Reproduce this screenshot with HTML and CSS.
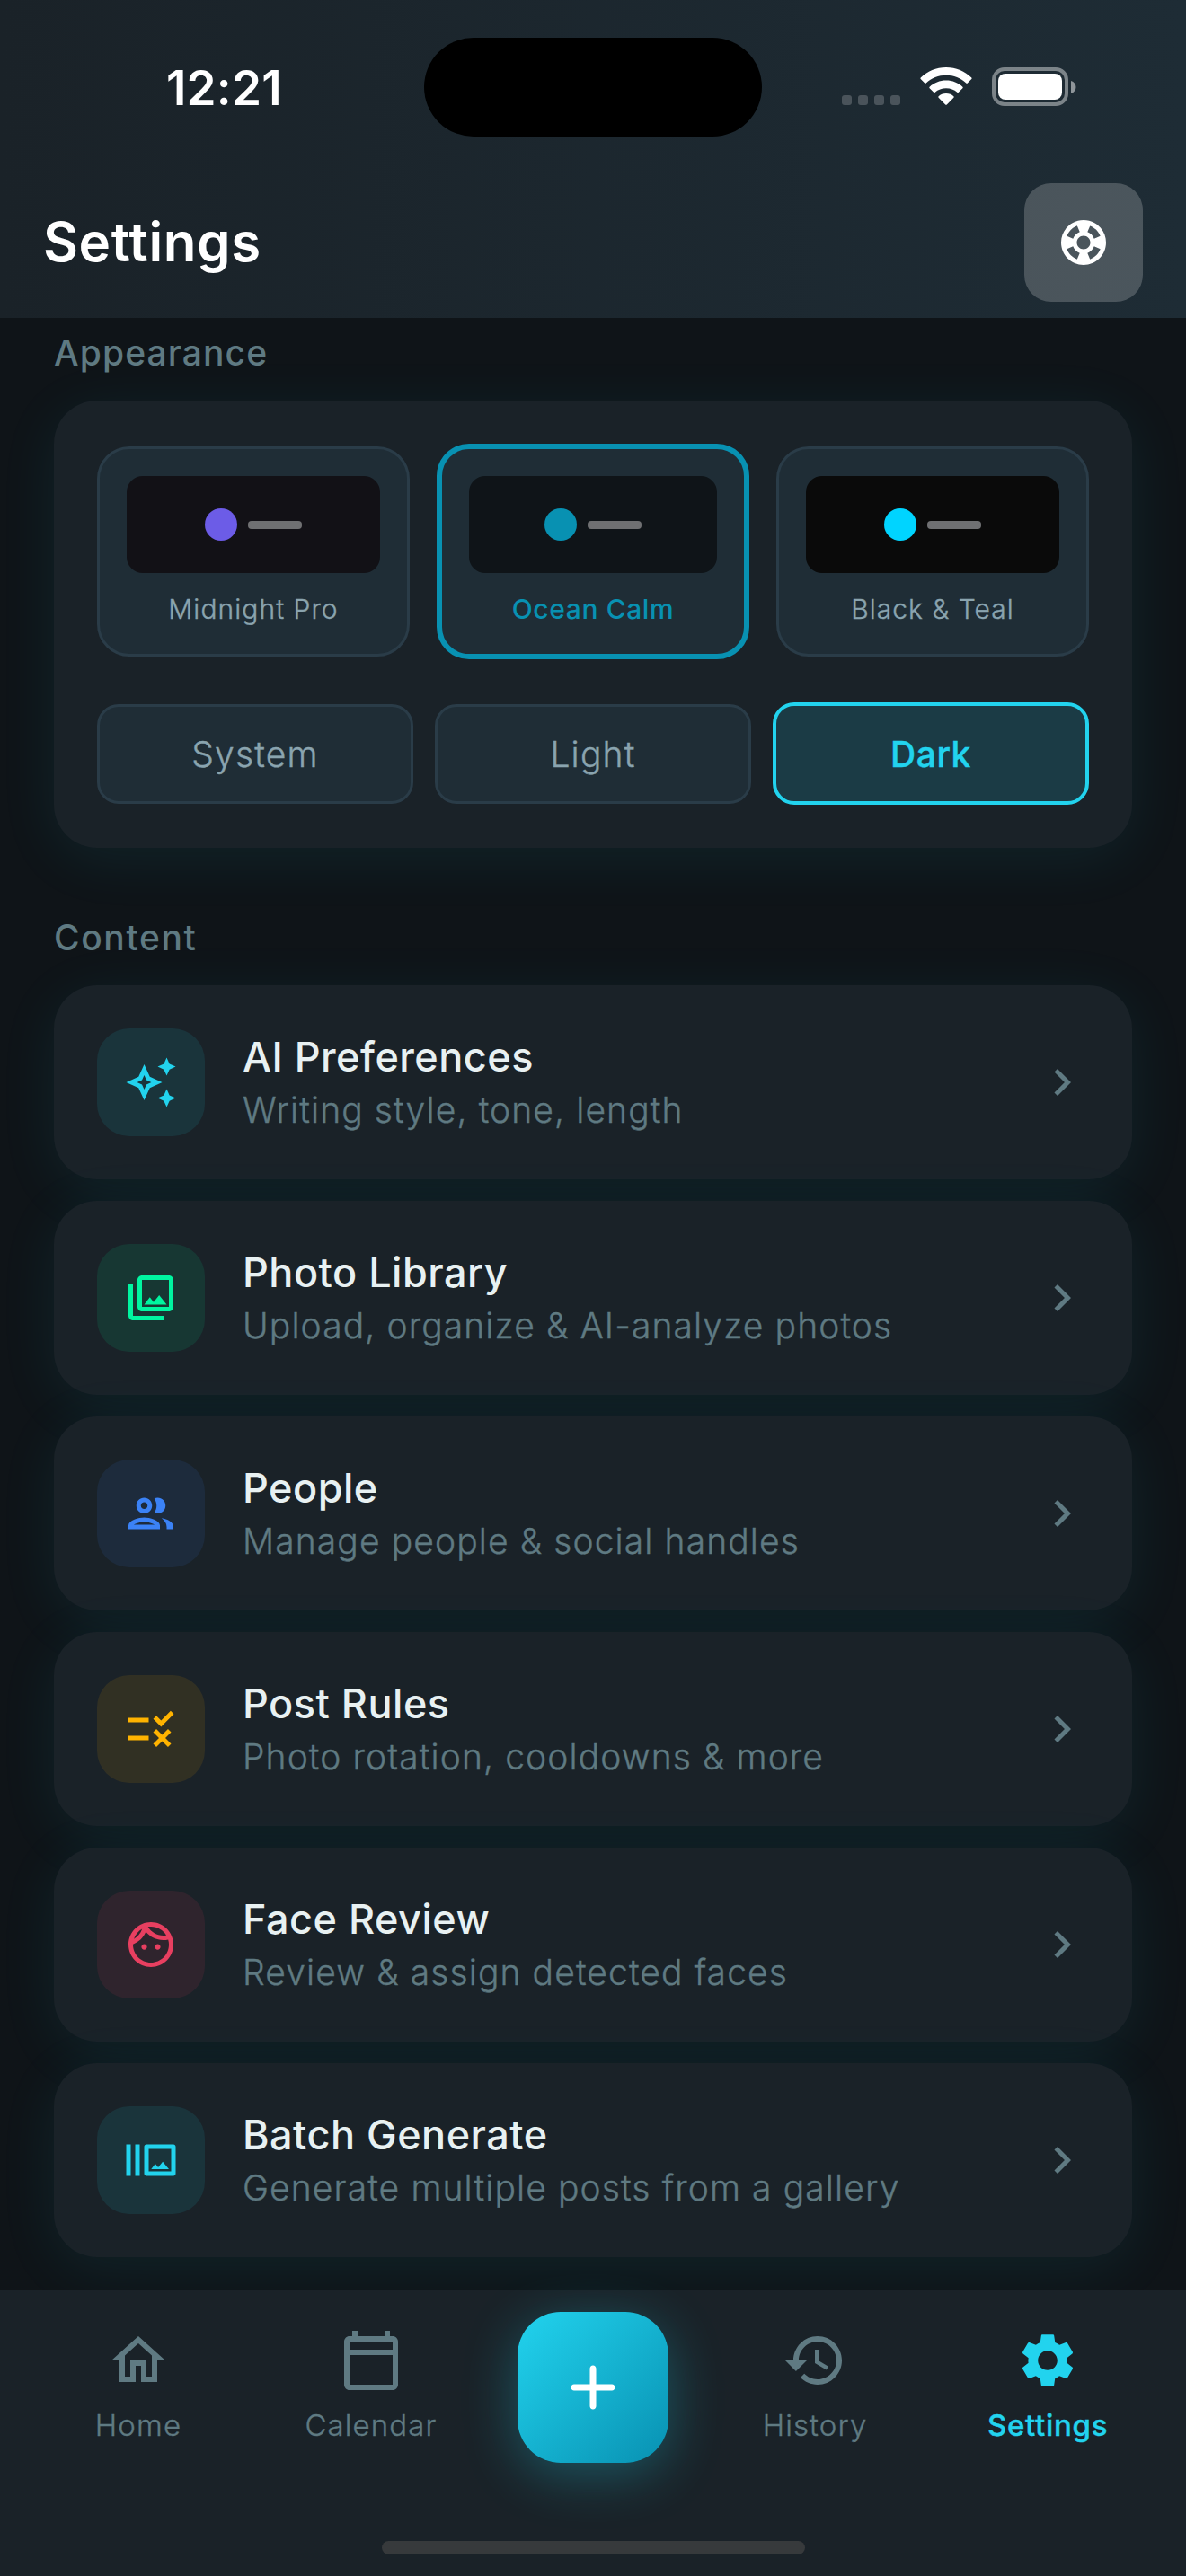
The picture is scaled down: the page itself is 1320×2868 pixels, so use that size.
FILE: index.html
```
<!DOCTYPE html>
<html lang="en">
<head>
  <meta charset="utf-8">
  <title>Settings</title>
  <meta name="viewport" content="width=device-width, initial-scale=1">
  <link rel="stylesheet" href="styles.css">
</head>
<body>
<div class="screen">
  <header class="header">
    <div class="status-bar">
      <div class="time">12:21</div>
      <div class="island"></div>
      <div class="status-icons">
        <div class="signal"><i></i><i></i><i></i><i></i></div>
        <svg class="wifi" viewBox="0 0 58 42"><path d="M29 0C40 0 50 4.300 57.300 11.600c.5.5.5 1 0 1.500l-4.500 4.500c-.5.5-1 .5-1.500 0C45.300 12 37.500 8.800 29 8.800S12.700 12 6.700 17.600c-.5.5-1 .5-1.500 0L.7 13.100c-.5-.5-.5-1 0-1.500C8 4.300 18 0 29 0z"/><path d="M29 14.600c7.100 0 13.600 2.700 18.400 7.200.5.5.5 1 0 1.500l-4.600 4.500c-.5.5-1 .5-1.500 0-3.200-2.800-7.500-4.500-12.300-4.500s-9.100 1.700-12.300 4.500c-.5.5-1 .5-1.500 0l-4.600-4.500c-.5-.5-.5-1 0-1.500 4.800-4.500 11.300-7.200 18.400-7.200z"/><path d="M29 29c3.300 0 6.200 1.200 8.400 3.200.5.5.5 1 0 1.500l-7.600 7.700c-.5.5-1.100.5-1.600 0l-7.600-7.700c-.5-.5-.5-1 0-1.500C22.800 30.200 25.700 29 29 29z"/></svg>
        <svg class="battery" viewBox="0 0 94 43"><rect x="2" y="2" width="81" height="39" rx="12" fill="none" stroke="#fff" stroke-opacity=".42" stroke-width="4"/><rect x="7" y="7" width="71" height="29" rx="8"/><path d="M88 15c3.500 1 5.500 3.700 5.500 7s-2 6-5.500 7z" fill-opacity=".5"/></svg>
      </div>
    </div>
    <div class="title-bar">
      <h1>Settings</h1>
      <button class="help">
        <svg viewBox="0 0 24 24"><path d="M12 2C6.480 2 2 6.480 2 12s4.480 10 10 10 10-4.480 10-10S17.520 2 12 2zm7.460 7.120-2.780 1.150c-.51-1.360-1.580-2.440-2.950-2.940l1.150-2.780c2.100.8 3.770 2.470 4.580 4.570zM12 15c-1.660 0-3-1.340-3-3s1.340-3 3-3 3 1.340 3 3-1.340 3-3 3zM9.130 4.540l1.170 2.780c-1.380.5-2.470 1.590-2.980 2.970L4.540 9.130c.81-2.110 2.480-3.780 4.590-4.590zM4.540 14.870l2.780-1.150c.51 1.380 1.590 2.460 2.970 2.960l-1.170 2.780c-2.100-.81-3.770-2.480-4.580-4.590zm10.340 4.590-1.150-2.780c1.370-.51 2.450-1.590 2.950-2.970l2.780 1.170c-.81 2.100-2.480 3.770-4.580 4.580z"/></svg>
      </button>
    </div>
  </header>

  <main class="content">
    <h2>Appearance</h2>
    <section class="card appearance">
      <div class="themes">
        <div class="theme midnight">
          <div class="preview"><i class="dot"></i><i class="bar"></i></div>
          <p>Midnight Pro</p>
        </div>
        <div class="theme ocean selected">
          <div class="preview"><i class="dot"></i><i class="bar"></i></div>
          <p>Ocean Calm</p>
        </div>
        <div class="theme black">
          <div class="preview"><i class="dot"></i><i class="bar"></i></div>
          <p>Black &amp; Teal</p>
        </div>
      </div>
      <div class="modes">
        <button class="mode">System</button>
        <button class="mode">Light</button>
        <button class="mode active">Dark</button>
      </div>
    </section>

    <h2 class="second">Content</h2>
    <section class="list">
      <div class="card row">
        <div class="tile cyan"><svg viewBox="0 0 24 24"><path d="m19 9 1.250-2.750L23 5l-2.750-1.250L19 1l-1.250 2.750L15 5l2.750 1.250zm0 6-1.250 2.750L15 19l2.750 1.250L19 23l1.250-2.750L23 19l-2.750-1.250zm-7.500-5.500L9 4 6.500 9.500 1 12l5.500 2.500L9 20l2.500-5.500L17 12zm-1.510 3.490L9 15.170l-.99-2.180L5.830 12l2.180-.99L9 8.830l.99 2.180 2.180.99z"/></svg></div>
        <div class="text">
          <h3>AI Preferences</h3>
          <p>Writing style, tone, length</p>
        </div>
        <svg class="chevron" viewBox="0 0 24 24"><path d="M10 6 8.590 7.410 13.170 12l-4.580 4.590L10 18l6-6z"/></svg>
      </div>
      <div class="card row">
        <div class="tile green"><svg viewBox="0 0 24 24"><path d="M20 4v12H8V4h12m0-2H8c-1.100 0-2 .9-2 2v12c0 1.100.9 2 2 2h12c1.100 0 2-.9 2-2V4c0-1.100-.9-2-2-2zm-8.500 9.670 1.690 2.260 2.480-3.100L19 15H9zM2 6v14c0 1.100.9 2 2 2h14v-2H4V6H2z"/></svg></div>
        <div class="text">
          <h3>Photo Library</h3>
          <p>Upload, organize &amp; AI-analyze photos</p>
        </div>
        <svg class="chevron" viewBox="0 0 24 24"><path d="M10 6 8.590 7.410 13.170 12l-4.580 4.590L10 18l6-6z"/></svg>
      </div>
      <div class="card row">
        <div class="tile blue"><svg viewBox="0 -1 24 24"><path d="M16.670 13.130C18.040 14.060 19 15.320 19 17v1h3v-1c0-2.180-2.570-3.470-5.330-3.870z"/><path d="M15 11c1.930 0 3.500-1.570 3.500-3.500S16.930 4 15 4c-.54 0-1.040.13-1.500.35.63.89 1 1.980 1 3.150s-.37 2.260-1 3.150c.46.22.96.35 1.500.35zM9 11c1.930 0 3.500-1.570 3.500-3.500S10.930 4 9 4 5.500 5.570 5.500 7.500 7.070 11 9 11zm0-5c.83 0 1.500.67 1.500 1.500S9.830 9 9 9s-1.500-.67-1.500-1.500S8.170 6 9 6zM9 12.750c-2.340 0-7 1.170-7 3.500V18h14v-1.750c0-2.330-4.660-3.500-7-3.500zM4.340 16c.84-.58 2.870-1.250 4.660-1.250s3.820.67 4.660 1.250H4.340z"/></svg></div>
        <div class="text">
          <h3>People</h3>
          <p>Manage people &amp; social handles</p>
        </div>
        <svg class="chevron" viewBox="0 0 24 24"><path d="M10 6 8.590 7.410 13.170 12l-4.580 4.590L10 18l6-6z"/></svg>
      </div>
      <div class="card row">
        <div class="tile yellow"><svg viewBox="0 0 24 24"><path d="M16.540 11 13 7.460l1.410-1.410 2.120 2.120 4.240-4.240 1.410 1.410zM11 7H2v2h9zm10 6.410L19.590 12 17 14.590 14.410 12 13 13.410 15.590 16 13 18.590 14.410 20 17 17.410 19.590 20 21 18.590 18.410 16zM11 15H2v2h9z"/></svg></div>
        <div class="text">
          <h3>Post Rules</h3>
          <p>Photo rotation, cooldowns &amp; more</p>
        </div>
        <svg class="chevron" viewBox="0 0 24 24"><path d="M10 6 8.590 7.410 13.170 12l-4.580 4.590L10 18l6-6z"/></svg>
      </div>
      <div class="card row">
        <div class="tile red"><svg viewBox="0 0 24 24"><path d="M10.250 13c0 .69-.56 1.250-1.250 1.250S7.750 13.690 7.750 13s.56-1.250 1.250-1.250 1.250.56 1.250 1.250zM15 11.750c-.69 0-1.250.56-1.250 1.250s.56 1.250 1.250 1.250 1.250-.56 1.250-1.250-.56-1.250-1.250-1.250zm7 .25c0 5.520-4.480 10-10 10S2 17.520 2 12 6.480 2 12 2s10 4.480 10 10zM10.660 4.120C12.060 6.440 14.600 8 17.500 8c.46 0 .91-.05 1.340-.12C17.440 5.560 14.900 4 12 4c-.46 0-.91.05-1.340.12zM4.420 9.470c1.710-.97 3.030-2.550 3.660-4.440C6.370 6 5.050 7.580 4.420 9.470zM20 12c0-.78-.12-1.530-.33-2.240-.7.15-1.420.24-2.170.24-3.130 0-5.920-1.440-7.760-3.690C8.690 8.870 6.600 10.880 4 11.860c.01.04 0 .09 0 .14 0 4.410 3.590 8 8 8s8-3.590 8-8z"/></svg></div>
        <div class="text">
          <h3>Face Review</h3>
          <p>Review &amp; assign detected faces</p>
        </div>
        <svg class="chevron" viewBox="0 0 24 24"><path d="M10 6 8.590 7.410 13.170 12l-4.580 4.590L10 18l6-6z"/></svg>
      </div>
      <div class="card row">
        <div class="tile cyan"><svg viewBox="0 0 24 24"><path d="M1 5h2v14H1zm4 0h2v14H5zm17 0H10c-.55 0-1 .45-1 1v12c0 .55.45 1 1 1h12c.55 0 1-.45 1-1V6c0-.55-.45-1-1-1zm-1 12H11V7h10v10z"/><path d="m17.250 12.670-2.030 2.530-1.300-1.560L12.100 16H20z"/></svg></div>
        <div class="text">
          <h3>Batch Generate</h3>
          <p>Generate multiple posts from a gallery</p>
        </div>
        <svg class="chevron" viewBox="0 0 24 24"><path d="M10 6 8.590 7.410 13.170 12l-4.580 4.590L10 18l6-6z"/></svg>
      </div>
    </section>
  </main>

  <footer class="footer">
    <nav class="nav">
      <a class="item"><svg viewBox="0 0 24 24"><path d="m12 5.690 5 4.500V18h-2v-6H9v6H7v-7.810l5-4.500M12 3 2 12h3v8h6v-6h2v6h6v-8h3z"/></svg>Home</a>
      <a class="item"><svg viewBox="0 0 24 24"><path d="M20 3h-1V1h-2v2H7V1H5v2H4c-1.100 0-2 .9-2 2v16c0 1.100.9 2 2 2h16c1.100 0 2-.9 2-2V5c0-1.100-.9-2-2-2zm0 18H4V10h16v11zm0-13H4V5h16v3z"/></svg>Calendar</a>
      <a class="fab"><svg viewBox="0 0 24 24"><path d="M18 13h-5v5c0 .55-.45 1-1 1s-1-.45-1-1v-5H6c-.55 0-1-.45-1-1s.45-1 1-1h5V6c0-.55.45-1 1-1s1 .45 1 1v5h5c.55 0 1 .45 1 1s-.45 1-1 1z"/></svg></a>
      <a class="item"><svg viewBox="0 0 24 24"><path d="M13 3c-4.970 0-9 4.030-9 9H1l3.890 3.890.07.14L9 12H6c0-3.870 3.130-7 7-7s7 3.130 7 7-3.130 7-7 7c-1.930 0-3.680-.79-4.940-2.060l-1.420 1.420C8.270 19.990 10.510 21 13 21c4.970 0 9-4.030 9-9s-4.030-9-9-9zm-1 5v5l4.250 2.520.77-1.280-3.520-2.090V8H12z"/></svg>History</a>
      <a class="item current"><svg viewBox="0 0 24 24"><path d="M19.140 12.940c.04-.3.06-.61.06-.94 0-.32-.02-.64-.07-.94l2.030-1.580c.18-.14.23-.41.12-.61l-1.920-3.320c-.12-.22-.37-.29-.59-.22l-2.390.96c-.5-.38-1.030-.7-1.620-.94l-.36-2.540c-.04-.24-.24-.41-.48-.41h-3.840c-.24 0-.43.17-.47.41l-.36 2.540c-.59.24-1.130.57-1.620.94l-2.390-.96c-.22-.08-.47 0-.59.22L2.740 8.870c-.12.21-.08.47.12.61l2.030 1.580c-.05.3-.09.63-.09.94s.02.64.07.94l-2.030 1.580c-.18.14-.23.41-.12.61l1.920 3.320c.12.22.37.29.59.22l2.390-.96c.5.38 1.030.7 1.620.94l.36 2.540c.05.24.24.41.48.41h3.840c.24 0 .44-.17.47-.41l.36-2.540c.59-.24 1.130-.56 1.620-.94l2.390.96c.22.08.47 0 .59-.22l1.920-3.320c.12-.22.07-.47-.12-.61zM12 15.600c-1.980 0-3.600-1.620-3.600-3.600s1.620-3.600 3.600-3.600 3.600 1.620 3.600 3.600-1.620 3.600-3.600 3.600z"/></svg>Settings</a>
    </nav>
    <div class="home-indicator"></div>
  </footer>
</div>
</body>
</html>
```
FILE: styles.css
```
* { box-sizing: border-box; margin: 0; padding: 0; }
body { background: #0f1418; font-family: Inter, sans-serif; color: #e8f1f2; }
svg { display: block; fill: currentColor; }
button { font: inherit; border: none; }

.screen { width: 1320px; height: 2868px; display: flex; flex-direction: column; overflow: hidden; }

/* header */
.header { height: 354px; background: linear-gradient(90deg, #1a2228, #1e2c35); color: #fff; position: relative; z-index: 1; }
.status-bar { height: 204px; padding-top: 42px; display: grid; grid-template-columns: 472px 376px 472px; }
.time { padding: 24px 0 0 185px; font-size: 53px; line-height: 64px; font-weight: 600; letter-spacing: 0.2px; }
.island { height: 110px; border-radius: 55px; background: #000; }
.status-icons { display: flex; align-items: flex-end; height: 76px; padding-left: 89px; }
.signal { display: flex; gap: 7px; margin-bottom: 1px; }
.signal i { width: 11px; height: 11px; border-radius: 3px; background: rgba(255,255,255,0.2); }
.wifi { width: 58px; height: 42px; margin: 0 22px 1px; }
.battery { width: 94px; height: 43px; }
.title-bar { display: flex; justify-content: space-between; align-items: center; padding: 0 48px; height: 132px; }
h1 { font-size: 60px; font-weight: 600; line-height: 72px; letter-spacing: 0.6px; margin-bottom: 2px; }
.help { width: 132px; height: 132px; border-radius: 30px; background: rgba(255,255,255,0.2); color: #fff; display: flex; align-items: center; justify-content: center; }
.help svg { width: 60px; height: 60px; }

/* content */
.content { flex: 1; padding: 11px 60px 0; }
h2 { font-size: 39px; font-weight: 500; line-height: 56px; color: #5f7a82; letter-spacing: 1.1px; margin-bottom: 25px; }
h2.second { margin: 72px 0 25px; letter-spacing: 1.6px; }
.card { background: #1a2228; border-radius: 48px; box-shadow: 0 12px 66px rgba(34,211,238,0.08); padding: 48px; }
.themes { display: grid; grid-template-columns: repeat(3, 1fr); gap: 30px; align-items: center; height: 240px; }
.theme { background: #1f2d36; border: 3px solid #2a3c48; border-radius: 36px; padding: 30px; }
.theme.selected { border: 6px solid #0891b2; }
.theme p { font-size: 30px; font-weight: 300; line-height: 42px; margin-top: 18px; padding-top: 1px; height: 42px; text-align: center; color: #8aa4af; letter-spacing: 1.05px; white-space: nowrap; -webkit-text-stroke: 0.4px; }
.theme.selected p { color: #0891b2; font-weight: 500; letter-spacing: 0.6px; -webkit-text-stroke: 0; }
.preview { height: 108px; border-radius: 18px; display: flex; align-items: center; justify-content: center; gap: 12px; }
.dot { width: 36px; height: 36px; border-radius: 50%; }
.bar { width: 60px; height: 9px; border-radius: 4px; background: #6f7072; }
.midnight .preview { background: #121116; }
.midnight .dot { background: #6c5ce7; }
.ocean .preview { background: #0f1418; }
.ocean .dot { background: #0891b2; }
.black .preview { background: #0a0a0a; }
.black .dot { background: #00d4ff; }
.modes { display: grid; grid-template-columns: repeat(3, 1fr); gap: 24px; align-items: center; margin-top: 48px; height: 114px; }
.mode { height: 111px; border: 3px solid #2a3c48; border-radius: 24px; background: #1f2d36; color: #8aa4af; font-size: 39px; font-weight: 300; letter-spacing: 1.2px; -webkit-text-stroke: 0.4px; }
.mode.active { height: 114px; border: 4.5px solid #22d3ee; background: rgba(34,211,238,0.15); color: #22d3ee; font-weight: 500; letter-spacing: 0.5px; }

.list { display: flex; flex-direction: column; gap: 24px; }
.row { height: 216px; display: flex; align-items: center; }
.tile { width: 120px; height: 120px; border-radius: 36px; display: flex; align-items: center; justify-content: center; }
.tile svg, .chevron { width: 60px; height: 60px; }
.cyan { color: #22d3ee; background: rgba(34,211,238,0.1); }
.green { color: #00f5a0; background: rgba(0,245,160,0.1); }
.blue { color: #3b82f6; background: rgba(59,130,246,0.1); }
.yellow { color: #ffb300; background: rgba(255,179,0,0.1); }
.red { color: #e83f60; background: rgba(232,63,96,0.1); }
.text { flex: 1; margin-left: 42px; }
h3 { font-size: 45px; font-weight: 500; line-height: 60px; letter-spacing: 0.5px; }
.text p { font-size: 39px; font-weight: 300; line-height: 54px; margin-top: 2px; color: #5f7a82; letter-spacing: 1.1px; -webkit-text-stroke: 0.4px; }
.chevron { color: #5f7a82; }

/* bottom bar */
.footer { height: 318px; background: #1a2228; position: relative; z-index: 1; }
.nav { display: grid; grid-template-columns: 259px 259px 235px 259px 259px; justify-content: center; padding-top: 24px; height: 279px; }
.item { display: flex; flex-direction: column; align-items: center; padding-top: 18px; color: #5f7a82; font-size: 33px; font-weight: 300; line-height: 46px; letter-spacing: 1.1px; -webkit-text-stroke: 0.4px; }
.item svg { width: 72px; height: 72px; margin-bottom: 13px; }
.item.current { color: #22d3ee; font-weight: 500; letter-spacing: 0.7px; }
.fab { justify-self: center; width: 168px; height: 168px; border-radius: 48px; background: linear-gradient(135deg, #22d3ee, #0891b2); box-shadow: 0 12px 60px rgba(34,211,238,0.3); color: #fff; display: flex; align-items: center; justify-content: center; }
.fab svg { width: 84px; height: 84px; }
.home-indicator { width: 471px; height: 15px; margin: 0 auto; border-radius: 8px; background: #373a3c; }
```
